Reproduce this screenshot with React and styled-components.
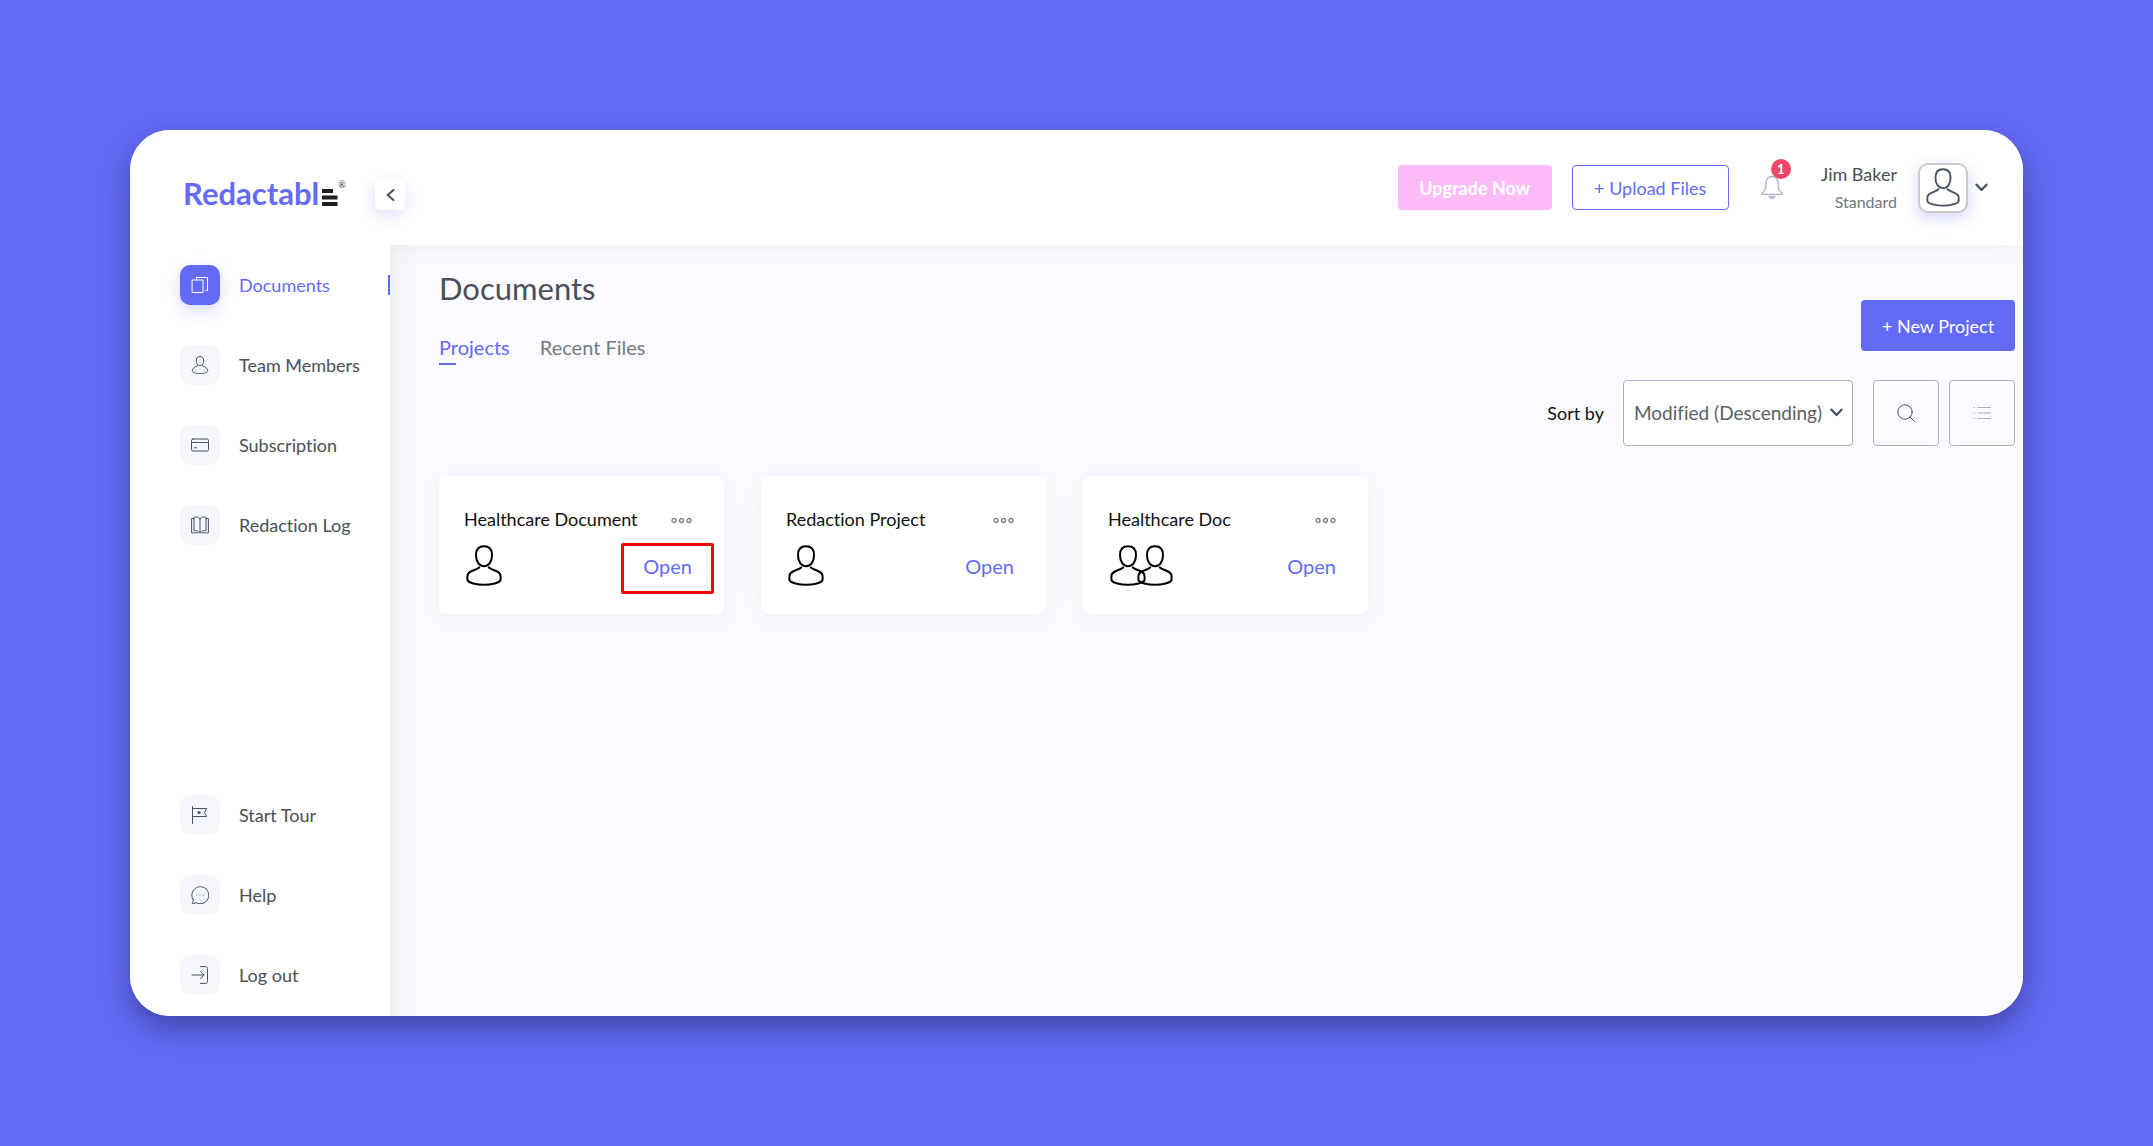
import React from "react";
import styled, { createGlobalStyle, css } from "styled-components";

const color = {
  brand: "#636bf6",
  ink: "#4b5162",
  text: "#495057",
  muted: "#74797f",
  line: "#a9b0c3",
  surface: "#fbfaff",
  tile: "#f6f7fd",
};

const GlobalStyle = createGlobalStyle`
  *, *::before, *::after { box-sizing: border-box; }
  body {
    margin: 0;
    background: ${color.brand};
    color: ${color.text};
    font-family: Lato, "Open Sans", sans-serif;
    font-size: 18px;
    font-variant-ligatures: none;
    line-height: 24px;
  }
  button, select { font: inherit; font-variant-ligatures: none; color: inherit; }
  h1, h2, p, ul { margin: 0; padding: 0; font-weight: 400; }
  ul { list-style: none; }
  a { color: inherit; text-decoration: none; }
  svg { display: block; flex: none; }
`;

const Page = styled.div`
  display: flex;
  min-height: 100vh;
  padding: 130px;
`;

const Frame = styled.div`
  flex: 1;
  min-width: 0;
  display: flex;
  flex-direction: column;
  overflow: hidden;
  border-radius: 40px;
  background: #fff;
  box-shadow: 0 12px 28px rgba(20, 20, 60, 0.42);
`;

const Header = styled.header`
  position: relative;
  z-index: 1;
  display: flex;
  align-items: center;
  justify-content: space-between;
  min-height: 115px;
  padding: 0 35px 0 53px;
  background: #fff;
  box-shadow: 0 0 30px rgba(60, 60, 90, 0.07);
`;

const Brand = styled.div`
  display: flex;
  align-items: center;
  gap: 27px;
  padding-top: 15px;
`;

const Logo = styled.a`
  display: flex;
  align-items: center;
  width: 165px;
  padding-bottom: 4px;
  color: ${color.brand};
  font-size: 31px;
  font-weight: 700;
  line-height: 32px;

  svg { margin: 4px 0 0 3px; }
`;

const Registered = styled.span`
  align-self: flex-start;
  color: #333;
  font-size: 9px;
  font-weight: 400;
  line-height: 16px;
`;

const CollapseButton = styled.button`
  display: grid;
  place-items: center;
  width: 30px;
  height: 30px;
  padding: 0;
  border: 0;
  border-radius: 5px;
  background: #fff;
  color: ${color.ink};
  box-shadow: 0 5px 15px rgba(99, 107, 246, 0.22);
`;

const HeaderActions = styled.div`
  display: flex;
  align-items: center;
`;

const Button = styled.button`
  height: ${(p) => (p.$tall ? 51 : 45)}px;
  min-width: ${(p) => (p.$wide ? 157 : 154)}px;
  padding: 0 16px;
  border: 1px solid ${(p) => p.$border || "transparent"};
  border-radius: 4px;
  background: ${(p) => p.$fill || "#fff"};
  color: ${(p) => p.$ink || "#fff"};
  font-weight: ${(p) => (p.$bold ? 700 : 400)};
  white-space: nowrap;

  & + & { margin-left: 20px; }
`;

const BellButton = styled.button`
  position: relative;
  margin-left: 32px;
  padding: 0;
  border: 0;
  background: none;
  color: ${color.line};
`;

const Badge = styled.span`
  position: absolute;
  top: -16px;
  left: 10px;
  width: 20px;
  height: 20px;
  border-radius: 50%;
  background: #f04468;
  color: #fff;
  font-size: 13px;
  font-weight: 700;
  line-height: 20px;
  text-align: center;
`;

const Account = styled.button`
  display: flex;
  align-items: center;
  margin-left: 38px;
  padding: 0;
  border: 0;
  background: none;
  text-align: right;
`;

const AccountText = styled.span`
  display: grid;
  gap: 4px;
  margin-right: 21px;
`;

const Plan = styled.span`
  color: ${color.muted};
  font-size: 16px;
`;

const Avatar = styled.span`
  display: grid;
  place-items: center;
  width: 50px;
  height: 50px;
  margin-right: 7px;
  border: 2px solid #c9c9c9;
  border-radius: 10px;
  background: #fff;
  color: ${color.ink};
  box-shadow: 0 5px 15px rgba(99, 107, 246, 0.28);
`;

const Body = styled.div`
  flex: 1;
  display: flex;
`;

const Sidebar = styled.nav`
  position: relative;
  z-index: 2;
  flex: none;
  display: flex;
  flex-direction: column;
  justify-content: space-between;
  width: 260px;
  padding: 20px 0 21px 50px;
  background: #fff;
`;

const NavList = styled.ul`
  display: grid;
  gap: 40px;
`;

const NavLink = styled.a`
  display: flex;
  align-items: center;
  gap: 19px;
  color: ${(p) => (p.$active ? color.brand : color.text)};

  ${(p) =>
    p.$active &&
    css`
      &::after {
        content: "";
        width: 2px;
        height: 20px;
        margin-left: auto;
        background: ${color.brand};
      }
    `}
`;

const NavIcon = styled.span`
  display: grid;
  place-items: center;
  width: 40px;
  height: 40px;
  border-radius: 10px;
  background: ${(p) => (p.$active ? color.brand : color.tile)};
  color: ${(p) => (p.$active ? "#fff" : color.ink)};
  box-shadow: ${(p) => (p.$active ? "0 5px 15px rgba(99, 107, 246, 0.28)" : "none")};
`;

const Main = styled.main`
  flex: 1;
  min-width: 0;
  padding: 23px 8px 40px 49px;
  background: ${color.surface};
  box-shadow: inset 30px 0 30px -30px rgba(60, 60, 90, 0.1);
`;

const TitleRow = styled.div`
  display: flex;
  justify-content: space-between;
  align-items: flex-end;
  margin-bottom: 15px;
`;

const Title = styled.h1`
  font-size: 31px;
  line-height: 40px;
`;

const Tabs = styled.div`
  display: flex;
  gap: 30px;
  margin-top: 25px;
`;

const Tab = styled.button`
  padding: 0;
  border: 0;
  background: none;
  color: ${(p) => (p.$active ? color.brand : color.muted)};
  font-size: 20px;
  line-height: 28px;
  text-align: left;

  &::after {
    content: "";
    display: block;
    width: 17px;
    height: 2px;
    margin-top: 2px;
    background: ${(p) => (p.$active ? color.brand : "transparent")};
  }
`;

const NewProjectSlot = styled.div`
  padding-bottom: 14px;
`;

const Toolbar = styled.div`
  display: flex;
  justify-content: flex-end;
  align-items: center;
  margin-bottom: 30px;
`;

const SortLabel = styled.label`
  margin-right: 19px;
  color: #111;
`;

const SelectWrap = styled.div`
  position: relative;
  width: 230px;
  margin-right: 10px;
  color: ${color.ink};

  svg {
    position: absolute;
    right: 10px;
    top: 28px;
    pointer-events: none;
  }
`;

const Select = styled.select`
  appearance: none;
  width: 100%;
  height: 66px;
  padding: 0 24px 0 10px;
  border: 1px solid ${color.line};
  border-radius: 4px;
  background: #fff;
  color: #5a5f66;
  font-size: 19px;
`;

const IconButton = styled.button`
  display: grid;
  place-items: center;
  width: 66px;
  height: 66px;
  margin-left: 10px;
  padding: 0;
  border: 1px solid ${color.line};
  border-radius: 4px;
  background: transparent;
  color: ${(p) => (p.$dim ? color.line : color.ink)};
`;

const Cards = styled.div`
  display: grid;
  grid-template-columns: repeat(auto-fill, 285px);
  gap: 37px;
`;

const Card = styled.article`
  display: grid;
  gap: 14px;
  height: 138px;
  padding: 31px 32px 24px 25px;
  align-content: start;
  border-radius: 8px;
  background: #fff;
  box-shadow: 0 5px 25px rgba(70, 70, 130, 0.06);
`;

const CardRow = styled.div`
  display: flex;
  justify-content: space-between;
  align-items: center;
`;

const CardTitle = styled.h2`
  color: #111;
  font-size: 18px;
`;

const MenuButton = styled.button`
  padding: 2px 0 0;
  border: 0;
  background: none;
  color: #7b8088;
`;

const Members = styled.div`
  display: flex;
  padding-left: 2px;
  color: #000;

  svg + svg { margin-left: -9px; }
`;

const OpenLink = styled.a`
  position: relative;
  color: ${color.brand};
  font-size: 20px;
  line-height: 28px;

  ${(p) =>
    p.$highlighted &&
    css`
      &::after {
        content: "";
        position: absolute;
        inset: -9px -22px -14px -22px;
        border: 3px solid #fd0000;
        border-radius: 2px;
      }
    `}
`;

function Icon({ size = 18, width = 1, children }) {
  return (
    <svg
      width={size}
      height={size}
      viewBox="0 0 18 18"
      fill="none"
      stroke="currentColor"
      strokeWidth={width}
      strokeLinecap="round"
      strokeLinejoin="round"
      aria-hidden="true"
    >
      {children}
    </svg>
  );
}

function Person({ width = 36, height = 41, stroke = 2 }) {
  return (
    <svg width={width} height={height} viewBox="0 0 36 41" fill="none" stroke="currentColor" strokeWidth={stroke} strokeLinecap="round" aria-hidden="true">
      <path d="M18 1.2c5.200 0 8 3.300 8 8.800 0 6.800-3.300 11.200-8 11.200S10 16.800 10 10c0-5.500 2.800-8.800 8-8.800Z" />
      <path d="M13.200 22.400C9.500 25.800 3.800 25.200 1.800 29.300 1.300 30.700 1.200 34.600 1.700 35.500 2.700 37.700 10.500 39.700 18 39.700S33.300 37.700 34.300 35.500C34.800 34.600 34.700 30.700 34.200 29.300 32.200 25.200 26.500 25.800 22.800 22.400" />
    </svg>
  );
}

function Chevron() {
  return (
    <svg width="13" height="9" viewBox="0 0 13 9" fill="none" stroke="currentColor" strokeWidth="2.300" strokeLinecap="round" strokeLinejoin="round" aria-hidden="true">
      <path d="M1.500 1.700 6.500 7 11.500 1.700" />
    </svg>
  );
}

const icons = {
  documents: (
    <>
      <rect x="1.500" y="4" width="10.500" height="12.500" />
      <path d="M5.500 1.500h11V14.500" />
      <path d="M5.500 1.500v2.500M14.500 14.500h2" opacity="0.7" />
    </>
  ),
  team: (
    <>
      <path d="M9 .5c2.600 0 3.700 1.800 3.700 4.300C12.700 7.700 11 9.700 9 9.700S5.300 7.700 5.300 4.800C5.300 2.300 6.400.5 9 .5Z" />
      <path d="M6.800 9.500C5 11.200 1.300 11.200 1.200 14.800 1.200 16.500 5 17.500 9 17.500s7.800-1 7.800-2.700C16.700 11.200 13 11.200 11.200 9.500" />
    </>
  ),
  card: (
    <>
      <rect x=".5" y="3" width="17" height="12" rx="1.500" />
      <path d="M.5 6.500h17M3.500 11.800h2" />
    </>
  ),
  log: (
    <>
      <path d="M9 3v14M9 3C7.500.5 4.500.8 3 1.500V14.500C5 14.300 7.500 15 9 17c1.500-2 4-2.700 6-2.500V1.500C13.500.8 10.500.5 9 3Z" />
      <path d="M3 2.500H.6V16.800H7M15 2.500h2.400V16.800H11" />
    </>
  ),
  flag: (
    <>
      <path d="M1.500.5v17M1.500 2.500h14.200l-2.200 4 2.200 4H1.500" />
      <circle cx="8" cy="6.500" r="1.600" fill="currentColor" stroke="none" />
    </>
  ),
  help: (
    <>
      <path d="M2.200 14A8.500 8.500 0 1 1 5 16.600C3.600 17.500 2.200 17.500 1 17.200 2 16.200 2.400 15.300 2.200 14Z" />
      <path d="M5.500 9h.4M8.800 9h.4M12.100 9h.4" opacity="0.7" />
    </>
  ),
  logout: (
    <>
      <path d="M9.500.6h5.300c1 0 1.700.7 1.700 1.700v13.400c0 1-.7 1.700-1.700 1.700H9.500" />
      <path d="M1 9h12M9.500 5.500 13 9l-3.500 3.500" />
    </>
  ),
};

const topNav = [
  { icon: "documents", label: "Documents", active: true },
  { icon: "team", label: "Team Members" },
  { icon: "card", label: "Subscription" },
  { icon: "log", label: "Redaction Log" },
];

const bottomNav = [
  { icon: "flag", label: "Start Tour" },
  { icon: "help", label: "Help" },
  { icon: "logout", label: "Log out" },
];

const projects = [
  { name: "Healthcare Document", members: 1, highlighted: true },
  { name: "Redaction Project", members: 1 },
  { name: "Healthcare Doc", members: 2 },
];

function Nav({ items }) {
  return (
    <NavList>
      {items.map(({ icon, label, active }) => (
        <li key={label}>
          <NavLink href="#" $active={active} aria-current={active ? "page" : undefined}>
            <NavIcon $active={active}>
              <Icon>{icons[icon]}</Icon>
            </NavIcon>
            {label}
          </NavLink>
        </li>
      ))}
    </NavList>
  );
}

function ProjectCard({ name, members, highlighted }) {
  return (
    <Card>
      <CardRow>
        <CardTitle>{name}</CardTitle>
        <MenuButton aria-label={`${name} options`}>
          <svg width="21" height="7" viewBox="0 0 21 7" fill="none" stroke="currentColor" strokeWidth="1.300" aria-hidden="true">
            <circle cx="3" cy="3.500" r="2" />
            <circle cx="10.500" cy="3.500" r="2" />
            <circle cx="18" cy="3.500" r="2" />
          </svg>
        </MenuButton>
      </CardRow>
      <CardRow>
        <Members>
          {Array.from({ length: members }, (_, i) => (
            <Person key={i} />
          ))}
        </Members>
        <OpenLink href="#" $highlighted={highlighted}>
          Open
        </OpenLink>
      </CardRow>
    </Card>
  );
}

export default function App() {
  return (
    <Page>
      <GlobalStyle />
      <Frame>
        <Header>
          <Brand>
            <Logo href="#">
              Redactabl
              <svg width="16" height="24" viewBox="0 0 16 24" fill="#1f1f1f" aria-hidden="true">
                <rect y="6" width="11" height="4" />
                <rect y="12.500" width="15.500" height="4" />
                <rect y="19" width="15.500" height="4" />
              </svg>
              <Registered>®</Registered>
            </Logo>
            <CollapseButton aria-label="Collapse sidebar">
              <svg width="9" height="12" viewBox="0 0 9 12" fill="none" stroke="currentColor" strokeWidth="2.200" strokeLinecap="round" strokeLinejoin="round" aria-hidden="true">
                <path d="M7.500 1 1.700 6l5.800 5" />
              </svg>
            </CollapseButton>
          </Brand>
          <HeaderActions>
            <Button $fill="#fdbbf8" $bold>Upgrade Now</Button>
            <Button $border={color.brand} $ink={color.brand} $wide>+ Upload Files</Button>
            <BellButton aria-label="Notifications">
              <svg width="22" height="25" viewBox="0 0 22 25" fill="none" stroke="currentColor" strokeWidth="1.300" strokeLinecap="round" strokeLinejoin="round" aria-hidden="true">
                <path d="M11 1.500c-4 0-6 3-6 6.500 0 6-.8 8-3.500 9.800-.8.700-.5 1.500.3 1.500h18.400c.8 0 1.100-.8.3-1.500C17.800 16 17 14 17 8c0-3.500-2-6.500-6-6.500Z" />
                <path d="M8 21.500c.5 1.500 1.500 2.200 3 2.200s2.500-.7 3-2.200Z" fill="currentColor" opacity="0.8" />
              </svg>
              <Badge>1</Badge>
            </BellButton>
            <Account>
              <AccountText>
                <span>Jim Baker</span>
                <Plan>Standard</Plan>
              </AccountText>
              <Avatar>
                <Person width={34} height={39} />
              </Avatar>
              <Chevron />
            </Account>
          </HeaderActions>
        </Header>
        <Body>
          <Sidebar>
            <Nav items={topNav} />
            <Nav items={bottomNav} />
          </Sidebar>
          <Main>
            <TitleRow>
              <div>
                <Title>Documents</Title>
                <Tabs>
                  <Tab $active>Projects</Tab>
                  <Tab>Recent Files</Tab>
                </Tabs>
              </div>
              <NewProjectSlot>
                <Button $fill={color.brand} $tall>+ New Project</Button>
              </NewProjectSlot>
            </TitleRow>
            <Toolbar>
              <SortLabel htmlFor="sort">Sort by</SortLabel>
              <SelectWrap>
                <Select id="sort" defaultValue="modified">
                  <option value="modified">Modified (Descending)</option>
                </Select>
                <Chevron />
              </SelectWrap>
              <IconButton aria-label="Search">
                <Icon>
                  <circle cx="8" cy="8" r="7.200" />
                  <path d="m13.200 13.200 4.200 4.200" />
                </Icon>
              </IconButton>
              <IconButton $dim aria-label="List view">
                <Icon width={1.2}>
                  <path d="M5 3.500h12.500M5 9h12.500M5 14.500h12.500M1 3.500h.5M1 9h.5M1 14.500h.5" />
                </Icon>
              </IconButton>
            </Toolbar>
            <Cards>
              {projects.map((project) => (
                <ProjectCard key={project.name} {...project} />
              ))}
            </Cards>
          </Main>
        </Body>
      </Frame>
    </Page>
  );
}
